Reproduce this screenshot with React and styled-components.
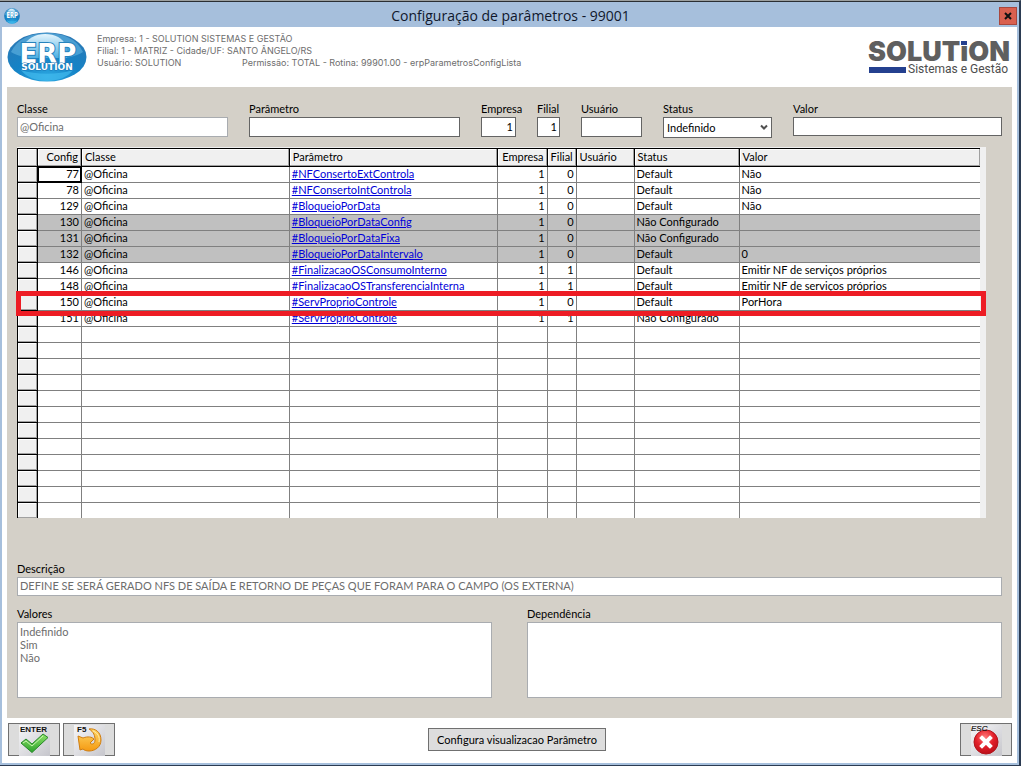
import React from "react";
import styled, { createGlobalStyle, css } from "styled-components";

const ui = `Lato, "Liberation Sans", Arial, sans-serif`;

const GlobalStyle = createGlobalStyle`
  *, *::before, *::after { box-sizing: border-box; }
  body { margin: 0; background: #fff; color: #000; font: 11px/13px ${ui}; }
  input, textarea, select, button { font: inherit; color: inherit; margin: 0; border-radius: 0; }
`;

const Window = styled.div`
  display: flex;
  flex-direction: column;
  min-height: 100vh;
  border: solid;
  border-width: 1px 2px 1px 0;
  border-color: #9c9f9f #2b3b52 #2b3b52 #2b3b52;
`;

const Frame = styled.div`
  flex: 1;
  display: flex;
  flex-direction: column;
  border: solid #a6bfdc;
  border-width: 0 2px 2px;
  background: #fff;
`;

const TitleBar = styled.header`
  display: grid;
  grid-template-columns: 24px 1fr 24px;
  align-items: center;
  height: 26px;
  margin: 0 -2px;
  padding: 2px 2px 0 4px;
  border-top: 1px solid #2a2e33;
  background: #a6bfdc;
`;

const Title = styled.h1`
  margin: 0;
  text-align: center;
  color: #10182c;
  font: 400 14px/20px "Open Sans", sans-serif;
`;

const CloseButton = styled.button`
  justify-self: end;
  display: grid;
  place-items: center;
  width: 18px;
  height: 18px;
  padding: 0;
  border: 1px solid #a8473d;
  background: #d9604f;
`;

const Banner = styled.div`
  display: flex;
  align-items: flex-start;
  height: 60px;
  padding: 5px 4px 0 5px;
`;

const Session = styled.div`
  flex: 1;
  margin: 1px 0 0 10px;
  color: #6d6d6d;
  font: 9px/12px Inter, sans-serif;
`;

const SessionRow = styled.div`
  display: flex;
`;

const SessionUser = styled.span`
  width: 145px;
`;

const Panel = styled.main`
  flex: 1;
  margin: 0 5px;
  padding: 15px 10px 19px;
  background: #d4d0c8;
`;

const Filters = styled.form`
  display: grid;
  grid-template-columns: 211fr 211fr 35px 23px 61px 109px 209fr;
  align-items: start;
  column-gap: 21px;
  height: 45px;
`;

const Field = styled.div`
  display: flex;
  flex-direction: column;
  min-width: 0;
`;

const Label = styled.label`
  height: 15px;
  line-height: 13px;
  white-space: nowrap;
`;

const boxed = css`
  width: 100%;
  padding: 0 2px 2px;
  outline: 0;
  border: 1px solid ${(p) => (p.$muted ? "#a9acb0" : "#646464")};
  background: #fff;
  color: ${(p) => (p.$muted ? "#6d6d6d" : "#000")};
`;

const TextBox = styled.input`
  ${boxed}
  height: ${(p) => (p.$low ? 19 : 20)}px;
  text-align: ${(p) => (p.$right ? "right" : "left")};
`;

const TextArea = styled.textarea`
  ${boxed}
  display: block;
  height: 76px;
  padding: 2px;
  resize: none;
`;

const SelectWrap = styled.div`
  display: grid;
  align-items: center;
  > * { grid-area: 1 / 1; }
  > svg { justify-self: end; margin-right: 4px; pointer-events: none; }
`;

const Select = styled.select`
  ${boxed}
  height: 21px;
  padding: 0 3px;
  appearance: none;
`;

const GridBox = styled.div`
  margin: 0 16px 0 0;
  padding-right: 6px;
  border-top: 1px solid #f0f0f0;
  background: #f0f0f0;
`;

const Table = styled.table`
  width: 100%;
  table-layout: fixed;
  border-collapse: separate;
  border-spacing: 0;
  border-top: 1px solid #000;
  border-left: 1px solid #000;
  background: #fff;
`;

const Col = styled.col`
  width: ${(p) => p.$w};
`;

const HeadCell = styled.th`
  height: 18px;
  padding: 0 3px;
  border-right: 1px solid #000;
  border-bottom: 1px solid #000;
  background: #f0f0f0;
  box-shadow: inset -1px -1px 0 #a0a0a0, inset 1px 1px 0 #fff;
  font-weight: 400;
  line-height: 15px;
  vertical-align: top;
  text-align: ${(p) => (p.$right ? "right" : "left")};
  white-space: nowrap;
  &:last-child { border-right: 0; }
`;

const Marker = styled.td`
  height: 16px;
  padding: 0;
  border-right: 1px solid #000;
  border-bottom: 1px solid #000;
  background: #f0f0f0;
  box-shadow: inset -1px -1px 0 #a0a0a0, inset 1px 1px 0 #fff;
  ${(p) => p.$marked && css`
    &::after {
      content: "";
      position: absolute;
      z-index: 1;
      inset: -4px -6px -5px -2px;
      border: 5px solid #ed1c24;
      pointer-events: none;
    }
  `}
`;

const Cell = styled.td`
  height: 16px;
  padding: 0 2px;
  border-right: 1px solid #808080;
  border-bottom: 1px solid #808080;
  line-height: 13px;
  vertical-align: top;
  white-space: nowrap;
  overflow: hidden;
  text-align: ${(p) => (p.$right ? "right" : "left")};
  &:last-child { border-right: 0; }
  ${(p) => p.$focused && css`
    border-color: #000;
    box-shadow: inset 0 0 0 1px #000;
  `}
`;

const Row = styled.tr`
  position: ${(p) => (p.$marked ? "relative" : "static")};
  background: ${(p) => (p.$shaded ? "#c0c0c0" : "#fff")};
  &:last-child > td { height: 15px; border-bottom: 0; }
`;

const ParamLink = styled.a`
  color: #0000d8;
  text-decoration: underline;
`;

const Details = styled.section`
  display: grid;
  grid-template-columns: 1fr 1fr;
  column-gap: 35px;
  row-gap: 11px;
  margin-top: 44px;
`;

const WideField = styled(Field)`
  grid-column: 1 / -1;
`;

const Footer = styled.footer`
  display: grid;
  grid-template-columns: 420fr auto 406fr;
  align-items: center;
  height: 45px;
  padding: 0 5px 2px 6px;
`;

const Actions = styled.div`
  display: flex;
  gap: 3px;
  justify-content: ${(p) => (p.$end ? "flex-end" : "flex-start")};
`;

const IconButton = styled.button`
  display: grid;
  justify-items: center;
  width: 52px;
  height: 33px;
  padding: 0;
  border: 1px solid #707070;
  background: #dcdcdc;
  > svg { display: block; }
`;

const TextButton = styled.button`
  min-width: 178px;
  height: 23px;
  padding: 0 4px;
  border: 1px solid #707070;
  background: #dddddd;
`;

function ErpLogo({ width, height, id, wordmark }) {
  return (
    <svg width={width} height={height} viewBox="0 0 80 50" preserveAspectRatio="none" aria-label="ERP Solution">
      <defs>
        <radialGradient id={id} cx="50%" cy="90%" r="90%">
          <stop offset="0" stopColor="#2ba6e0" />
          <stop offset="0.45" stopColor="#1583c6" />
          <stop offset="1" stopColor="#2d78b4" />
        </radialGradient>
        <linearGradient id={`${id}-shine`} x1="0" y1="0" x2="0" y2="1">
          <stop offset="0" stopColor="#e6f5fd" />
          <stop offset="1" stopColor="#4aaee2" />
        </linearGradient>
      </defs>
      <ellipse cx="40" cy="25" rx="39.5" ry="24.5" fill={`url(#${id})`} />
      <path d="M4 20C10 7 24 1 40 1s30 6 36 19c-8 5-16 6-24 6H28C20 26 11 24 4 20z" fill="#62b5e3" opacity="0.6" />
      <path d="M16 15C20 6 29 2 38 2c10 0 18 4 21 12l1 12H16z" fill={`url(#${id}-shine)`} />
      <path d="M14 38c15 5 37 5 52 0-5 7-15 11-26 11S19 45 14 38z" fill="#43bdf0" opacity="0.65" />
      <text x="41" y="31" textAnchor="middle" fontFamily="DejaVu Sans" fontWeight="700" fontSize="26" fill="#fff" stroke="#2583bd" strokeWidth="2" paintOrder="stroke">ERP</text>
      {wordmark && (
        <text x="40" y="38" textAnchor="middle" fontFamily="DejaVu Sans" fontWeight="700" fontSize="9" fill="#fff" stroke="#1a76b5" strokeWidth="1" paintOrder="stroke">SOLUTION</text>
      )}
    </svg>
  );
}

function SolutionLogo() {
  return (
    <svg width="145" height="46" viewBox="0 0 145 46" aria-label="Solution Sistemas e Gestão">
      <text x="0" y="29" fontFamily="Inter" fontWeight="900" fontSize="27" fill="#5f5f5f">SOLUTiON</text>
      <rect x="92" y="7" width="8" height="7" fill="#fff" />
      <rect x="93" y="9" width="6" height="4" fill="#24408f" />
      <rect x="1" y="35" width="37" height="6" fill="#24408f" />
      <text x="40" y="41" fontFamily="Roboto" fontSize="12" fill="#4d4d4d">Sistemas e Gestão</text>
    </svg>
  );
}

function KeyBackdrop({ id }) {
  return (
    <>
      <defs>
        <linearGradient id={`${id}-bg`} x1="0" y1="0" x2="1" y2="1">
          <stop offset="0" stopColor="#f6f6f8" />
          <stop offset="1" stopColor="#c6c6cc" />
        </linearGradient>
      </defs>
      <rect x="10" y="1" width="31" height="31" fill={`url(#${id}-bg)`} />
    </>
  );
}

function EnterIcon() {
  return (
    <svg width="50" height="32" viewBox="0 0 50 32">
      <KeyBackdrop id="enter" />
      <defs>
        <linearGradient id="enter-g" x1="0" y1="0" x2="0" y2="1">
          <stop offset="0" stopColor="#8fe36a" />
          <stop offset="1" stopColor="#2ba32a" />
        </linearGradient>
      </defs>
      <path d="M12 19l5-4 6 5L34 10l5 3.500L23 28.500z" fill="url(#enter-g)" stroke="#27872a" strokeWidth="1" strokeLinejoin="round" />
      <path d="M14 19l3-2 6 5L34 12" fill="none" stroke="#c8f5b0" strokeWidth="1" />
      <text x="11" y="8" fontFamily="Liberation Sans" fontWeight="700" fontSize="8" fill="#111">ENTER</text>
    </svg>
  );
}

function RefreshIcon() {
  return (
    <svg width="50" height="32" viewBox="0 0 50 32">
      <KeyBackdrop id="f5" />
      <defs>
        <linearGradient id="f5-g" x1="0" y1="0" x2="0" y2="1">
          <stop offset="0" stopColor="#ffd867" />
          <stop offset="1" stopColor="#f59a12" />
        </linearGradient>
      </defs>
      <path d="M25 5c6-1 12 3 12 11 0 7-6 11-12 11-3 0-5-1-6-2l-3 1-2-14 5 2c5-2 9-1 11 1l-4 4c2 2 5 1 5-3s-1-8-6-11z" fill="url(#f5-g)" stroke="#cf7d10" strokeWidth="1" strokeLinejoin="round" />
      <path d="M29 7c5 2 7 6 6 11" fill="none" stroke="#ffeaa8" strokeWidth="1" />
      <text x="13" y="8" fontFamily="Liberation Sans" fontWeight="700" fontSize="8" fill="#111">F5</text>
    </svg>
  );
}

function EscIcon() {
  return (
    <svg width="50" height="32" viewBox="0 0 50 32">
      <KeyBackdrop id="esc" />
      <defs>
        <radialGradient id="esc-g" cx="45%" cy="30%" r="75%">
          <stop offset="0" stopColor="#ff7a7a" />
          <stop offset="0.5" stopColor="#e3202a" />
          <stop offset="1" stopColor="#b50d17" />
        </radialGradient>
      </defs>
      <circle cx="25" cy="18" r="12" fill="url(#esc-g)" stroke="#b3151c" strokeWidth="1" />
      <path d="M21 14l8 8M29 14L21 22" stroke="#fff" strokeWidth="4" strokeLinecap="square" />
      <text x="10" y="7" fontFamily="Liberation Sans" fontStyle="italic" fontSize="8" fill="#111" stroke="#111" strokeWidth="0.200">ESC</text>
    </svg>
  );
}

const columns = [
  { key: "config", title: "Config", w: "44px", right: true },
  { key: "classe", title: "Classe", w: "21.6%" },
  { key: "parametro", title: "Parâmetro", w: "21.6%" },
  { key: "empresa", title: "Empresa", w: "50px", right: true },
  { key: "filial", title: "Filial", w: "29px", right: true },
  { key: "usuario", title: "Usuário", w: "58px" },
  { key: "status", title: "Status", w: "105px" },
  { key: "valor", title: "Valor", w: "auto" },
];

const rows = [
  [77, "#NFConsertoExtControla", 0, "Default", "Não"],
  [78, "#NFConsertoIntControla", 0, "Default", "Não"],
  [129, "#BloqueioPorData", 0, "Default", "Não"],
  [130, "#BloqueioPorDataConfig", 0, "Não Configurado", ""],
  [131, "#BloqueioPorDataFixa", 0, "Não Configurado", ""],
  [132, "#BloqueioPorDataIntervalo", 0, "Default", "0"],
  [146, "#FinalizacaoOSConsumoInterno", 1, "Default", "Emitir NF de serviços próprios"],
  [148, "#FinalizacaoOSTransferenciaInterna", 1, "Default", "Emitir NF de serviços próprios"],
  [150, "#ServProprioControle", 0, "Default", "PorHora"],
  [151, "#ServProprioControle", 1, "Não Configurado", ""],
].map(([config, parametro, filial, status, valor]) => ({
  config, classe: "@Oficina", parametro, empresa: 1, filial, usuario: "", status, valor,
}));

const shaded = [130, 131, 132];
const marked = 150;
const blanks = Array.from({ length: 12 }, (_, i) => i);

function ParameterGrid() {
  return (
    <GridBox>
      <Table>
        <colgroup>
          <Col $w="20px" />
          {columns.map((c) => <Col key={c.key} $w={c.w} />)}
        </colgroup>
        <thead>
          <tr>
            <HeadCell aria-label="Seleção" />
            {columns.map((c) => (
              <HeadCell key={c.key} scope="col" $right={c.right}>{c.title}</HeadCell>
            ))}
          </tr>
        </thead>
        <tbody>
          {rows.map((r, i) => (
            <Row key={r.config} $shaded={shaded.includes(r.config)} $marked={r.config === marked}>
              <Marker $marked={r.config === marked} />
              {columns.map((c) => (
                <Cell key={c.key} $right={c.right} $focused={i === 0 && c.key === "config"}>
                  {c.key === "parametro" ? <ParamLink href="#parametro">{r[c.key]}</ParamLink> : r[c.key]}
                </Cell>
              ))}
            </Row>
          ))}
          {blanks.map((b) => (
            <Row key={b}>
              <Marker />
              {columns.map((c) => <Cell key={c.key} />)}
            </Row>
          ))}
        </tbody>
      </Table>
    </GridBox>
  );
}

function Filter({ id, label, ...box }) {
  return (
    <Field>
      <Label htmlFor={id}>{label}</Label>
      <TextBox id={id} {...box} />
    </Field>
  );
}

export default function App() {
  return (
    <>
      <GlobalStyle />
      <Window>
        <Frame>
          <TitleBar>
            <ErpLogo width={16} height={16} id="erp-small" />
            <Title>Configuração de parâmetros - 99001</Title>
            <CloseButton aria-label="Fechar">
              <svg width="8" height="8" viewBox="0 0 8 8">
                <path d="M1 1l6 6M7 1L1 7" stroke="#111" strokeWidth="2" />
              </svg>
            </CloseButton>
          </TitleBar>
          <Banner>
            <ErpLogo width={80} height={50} id="erp-large" wordmark />
            <Session>
              <div>Empresa: 1 - SOLUTION SISTEMAS E GESTÃO</div>
              <div>Filial: 1 - MATRIZ - Cidade/UF: SANTO ÂNGELO/RS</div>
              <SessionRow>
                <SessionUser>Usuário: SOLUTION</SessionUser>
                <span>Permissão: TOTAL - Rotina: 99901.00 - erpParametrosConfigLista</span>
              </SessionRow>
            </Session>
            <SolutionLogo />
          </Banner>
          <Panel>
            <Filters>
              <Filter id="classe" label="Classe" defaultValue="@Oficina" readOnly $muted />
              <Filter id="parametro" label="Parâmetro" />
              <Filter id="empresa" label="Empresa" defaultValue="1" $right />
              <Filter id="filial" label="Filial" defaultValue="1" $right />
              <Filter id="usuario" label="Usuário" />
              <Field>
                <Label htmlFor="status">Status</Label>
                <SelectWrap>
                  <Select id="status" defaultValue="Indefinido">
                    <option>Indefinido</option>
                    <option>Default</option>
                    <option>Não Configurado</option>
                  </Select>
                  <svg width="8" height="7" viewBox="0 0 8 7">
                    <path d="M1 1.500l3 3 3-3" fill="none" stroke="#505050" strokeWidth="2" />
                  </svg>
                </SelectWrap>
              </Field>
              <Filter id="valor" label="Valor" $low />
            </Filters>
            <ParameterGrid />
            <Details>
              <WideField>
                <Label htmlFor="descricao">Descrição</Label>
                <TextBox
                  id="descricao"
                  readOnly
                  $muted
                  $low
                  defaultValue="DEFINE SE SERÁ GERADO NFS DE SAÍDA E RETORNO DE PEÇAS QUE FORAM PARA O CAMPO (OS EXTERNA)"
                />
              </WideField>
              <Field>
                <Label htmlFor="valores">Valores</Label>
                <TextArea id="valores" readOnly $muted defaultValue={"Indefinido\nSim\nNão"} />
              </Field>
              <Field>
                <Label htmlFor="dependencia">Dependência</Label>
                <TextArea id="dependencia" readOnly $muted />
              </Field>
            </Details>
          </Panel>
          <Footer>
            <Actions>
              <IconButton aria-label="Confirmar"><EnterIcon /></IconButton>
              <IconButton aria-label="Atualizar"><RefreshIcon /></IconButton>
            </Actions>
            <TextButton>Configura visualizacao Parâmetro</TextButton>
            <Actions $end>
              <IconButton aria-label="Sair"><EscIcon /></IconButton>
            </Actions>
          </Footer>
        </Frame>
      </Window>
    </>
  );
}
